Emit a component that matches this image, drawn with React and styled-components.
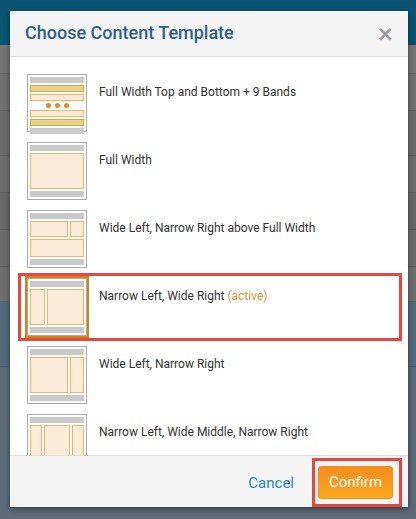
import React from 'react'
import styled, { createGlobalStyle, css } from 'styled-components'

const GlobalStyle = createGlobalStyle`
  html, body {
    margin: 0;
    padding: 0;
  }
  body {
    font-family: Roboto, 'Liberation Sans', sans-serif;
    background: #6b6b6b;
  }
`

const templates = [
  { id: 'bands', name: 'Full Width Top and Bottom + 9 Bands' },
  { id: 'full', name: 'Full Width' },
  { id: 'wide-narrow-full', name: 'Wide Left, Narrow Right above Full Width' },
  { id: 'narrow-wide', name: 'Narrow Left, Wide Right', active: true },
  { id: 'wide-narrow', name: 'Wide Left, Narrow Right' },
  { id: 'narrow-wide-narrow', name: 'Narrow Left, Wide Middle, Narrow Right' }
]

const Page = styled.div`
  position: relative;
  width: 416px;
  height: 519px;
  overflow: hidden;
  display: flex;
  flex-direction: column;
`

const PageTop = styled.div`
  height: 45px;
  background: #0a5372;
  flex-shrink: 0;
`

const PageStripe = styled.div`
  height: ${p => p.h}px;
  background: ${p => p.bg};
  border-bottom: 1px solid rgba(0, 0, 0, 0.12);
  flex-shrink: 0;
`

const Modal = styled.div`
  position: absolute;
  left: 10px;
  top: 11px;
  width: 398px;
  height: 496px;
  background: #fff;
  display: flex;
  flex-direction: column;
  box-shadow: 0 2px 6px rgba(0, 0, 0, 0.45);
`

const Header = styled.div`
  height: 45px;
  flex-shrink: 0;
  background: #f4f4f4;
  border-bottom: 1px solid #dcdcdc;
  display: flex;
  align-items: center;
  justify-content: space-between;
  padding: 0 14px 0 15px;
`

const Title = styled.h2`
  margin: 0;
  font-size: 18px;
  font-weight: 500;
  color: #2e5f8c;
  padding-bottom: 3px;
`

const Close = styled.span`
  font-family: 'DejaVu Sans', sans-serif;
  font-size: 21px;
  font-weight: bold;
  color: #9a9a9a;
  line-height: 1;
  margin-top: 2px;
`

const Body = styled.div`
  flex: 1;
  overflow: hidden;
  padding: 12px 6px 0 8px;
`

const Row = styled.div`
  height: 68px;
  box-sizing: border-box;
  padding: 5px 0 5px 9px;
  display: flex;
  align-items: flex-start;
  gap: 12px;
  ${p =>
    p.active &&
    css`
      outline: 3px solid #e5483f;
      outline-offset: -3px;
    `}
`

const Thumb = styled.div`
  width: 60px;
  height: 58px;
  box-sizing: border-box;
  border: 1px solid #ababab;
  background: #fff;
  padding: 2px;
  display: flex;
  flex-direction: column;
  gap: 2px;
  flex-shrink: 0;
  ${p =>
    p.active &&
    css`
      outline: 2px solid #d9810f;
    `}
`

const Bar = styled.div`
  height: 6px;
  background: #c9c9c9;
  flex-shrink: 0;
`

const Block = styled.div`
  flex: ${p => p.grow || 1};
  box-sizing: border-box;
  background: #fcebd9;
  border: 1px solid #f1b367;
`

const Band = styled.div`
  height: 7px;
  box-sizing: border-box;
  flex-shrink: 0;
  background: ${p => (p.tan ? '#ead38e' : '#fcebd9')};
  border: 1px solid ${p => (p.tan ? '#d3a83f' : '#f1b367')};
`

const Cols = styled.div`
  flex: ${p => p.grow || 1};
  display: flex;
  gap: 2px;
`

const Dots = styled.div`
  flex: 1;
  display: flex;
  align-items: center;
  justify-content: center;
  gap: 4px;
`

const Dot = styled.span`
  width: 5px;
  height: 5px;
  border-radius: 50%;
  background: #e7892a;
`

const Label = styled.div`
  margin-top: 11px;
  font-size: 12px;
  color: #333;
`

const Active = styled.span`
  color: #e8913a;
`

const Footer = styled.div`
  height: 51px;
  flex-shrink: 0;
  background: #f4f4f4;
  border-top: 1px solid #e0e0e0;
  display: flex;
  align-items: center;
  justify-content: flex-end;
  padding-right: 14px;
  gap: 18px;
`

const CancelLink = styled.a`
  font-size: 15px;
  color: #2b88bd;
  cursor: pointer;
  margin-top: 2px;
`

const ConfirmWrap = styled.div`
  padding: 5px 6px 5px 3px;
  border: 3px solid #e5483f;
  margin-right: -8px;
  margin-top: 1px;
`

const ConfirmButton = styled.button`
  width: 75px;
  height: 33px;
  border: 1px solid #f2911c;
  border-radius: 3px;
  background: linear-gradient(#f68d1f, #fba71e);
  color: #fff;
  font-family: Roboto, 'Liberation Sans', sans-serif;
  font-size: 15px;
  display: block;
`

const Preview = ({ id }) => {
  switch (id) {
    case 'bands':
      return (
        <>
          <Bar />
          <Band tan />
          <Band />
          <Dots>
            <Dot />
            <Dot />
            <Dot />
          </Dots>
          <Band />
          <Band tan />
          <Bar />
        </>
      )
    case 'full':
      return (
        <>
          <Bar />
          <Block />
          <Bar />
        </>
      )
    case 'wide-narrow-full':
      return (
        <>
          <Bar />
          <Cols>
            <Block grow={38} />
            <Block grow={13} />
          </Cols>
          <Block />
          <Bar />
        </>
      )
    case 'narrow-wide':
      return (
        <>
          <Bar />
          <Cols>
            <Block grow={14} />
            <Block grow={38} />
          </Cols>
          <Bar />
        </>
      )
    case 'wide-narrow':
      return (
        <>
          <Bar />
          <Cols>
            <Block grow={38} />
            <Block grow={13} />
          </Cols>
          <Bar />
        </>
      )
    default:
      return (
        <>
          <Bar />
          <Cols>
            <Block grow={12} />
            <Block grow={28} />
            <Block grow={12} />
          </Cols>
          <Bar />
        </>
      )
  }
}

const App = () => {
  return (
    <Page>
      <GlobalStyle />
      <PageTop />
      <PageStripe h={28} bg="#747474" />
      <PageStripe h={36} bg="#707070" />
      <PageStripe h={44} bg="#6c6c6c" />
      <PageStripe h={36} bg="#6e6e6e" />
      <PageStripe h={36} bg="#686868" />
      <PageStripe h={36} bg="#6c6c6c" />
      <PageStripe h={34} bg="#6e6e6e" />
      <PageStripe h={64} bg="#53697c" />
      <PageStripe h={160} bg="#5d6b78" />
      <Modal>
        <Header>
          <Title>Choose Content Template</Title>
          <Close>×</Close>
        </Header>
        <Body>
          {templates.map(t => (
            <Row key={t.id} active={t.active}>
              <Thumb active={t.active}>
                <Preview id={t.id} />
              </Thumb>
              <Label>
                {t.name}
                {t.active && <Active> (active)</Active>}
              </Label>
            </Row>
          ))}
        </Body>
        <Footer>
          <CancelLink>Cancel</CancelLink>
          <ConfirmWrap>
            <ConfirmButton>Confirm</ConfirmButton>
          </ConfirmWrap>
        </Footer>
      </Modal>
    </Page>
  )
}

export default App
